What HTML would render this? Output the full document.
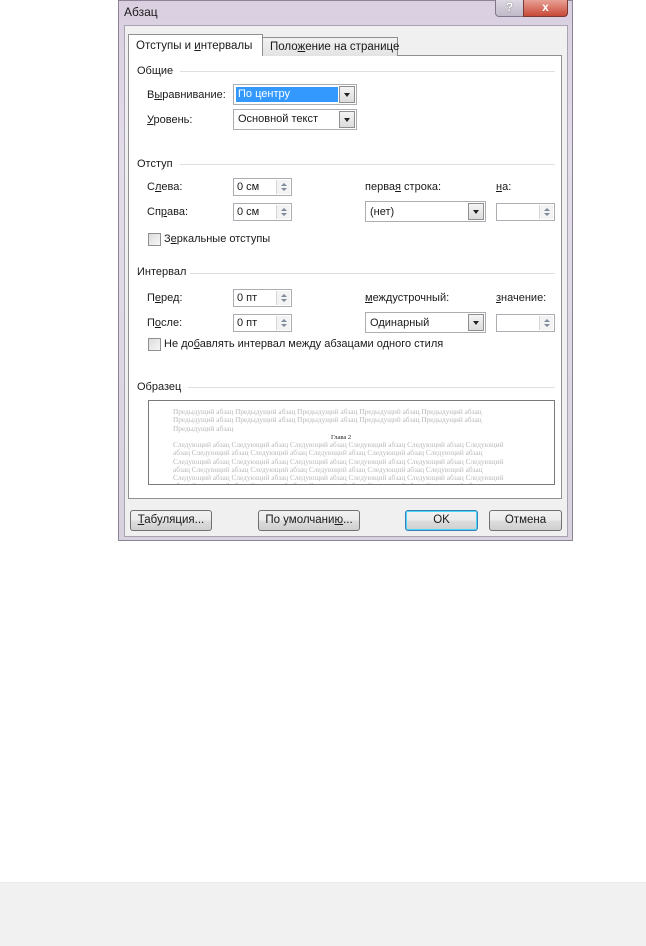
<!DOCTYPE html>
<html><head><meta charset="utf-8"><style>
*{margin:0;padding:0;box-sizing:border-box}
body{width:646px;height:946px;background:#fff;position:relative;overflow:hidden;font-family:"Liberation Sans","DejaVu Sans",sans-serif;font-size:11px;color:#1a1a1a}
.a{position:absolute;white-space:nowrap}
u{text-decoration:underline}
.frame{left:118px;top:0;width:455px;height:541px;background:linear-gradient(180deg,#d9cfe0 0%,#e3dce9 30%,#d8d2de 100%);border:1px solid #8c8494}
.client{left:124px;top:25px;width:444px;height:512px;background:#f0f0f0;border:1px solid #a9a2b0}
.panel{left:128px;top:55px;width:434px;height:444px;background:#fff;border:1px solid #8e8f8f}
.hdr{font-size:11px}
.line{height:1px;background:#dcdfe3}
.box{background:#fff;border:1px solid #abadb3}
.dd{position:absolute;right:1px;top:1px;bottom:1px;width:16px;background:linear-gradient(#f4f4f4,#dcdcdc);border:1px solid #8f8f8f}
.dd:after{content:"";position:absolute;left:4px;top:6px;border-left:3px solid transparent;border-right:3px solid transparent;border-top:4px solid #222}
.sp{position:absolute;right:1px;top:1px;bottom:1px;width:14px;background:#f3f3f3;border-left:1px solid #d6d6d6}
.sp:before{content:"";position:absolute;left:4px;top:3px;border-left:3px solid transparent;border-right:3px solid transparent;border-bottom:3px solid #7c8a99}
.sp:after{content:"";position:absolute;left:4px;bottom:3px;border-left:3px solid transparent;border-right:3px solid transparent;border-top:3px solid #7c8a99}
.cb{width:13px;height:13px;border:1px solid #8e8f8f;background:linear-gradient(135deg,#dcdcdc,#f6f6f6)}
.btn{height:21px;border:1px solid #707070;border-radius:3px;background:linear-gradient(#f2f2f2 0%,#ebebeb 50%,#dddddd 51%,#cfcfcf 100%);text-align:center;line-height:19px;font-size:11.5px}
.pv{font-family:"Liberation Serif",serif;font-size:7.3px;color:#b8b8b8;line-height:8.3px}
</style></head><body>
<div class="a frame"></div>
<div class="a" style="left:124px;top:5px;font-size:12px">Абзац</div>
<div class="a" style="left:495px;top:0;width:29px;height:17px;border:1px solid #80788a;border-top:none;border-radius:0 0 0 4px;background:linear-gradient(#ddd8e2,#bfb8c8);text-align:center;color:#fff;font-size:12px;line-height:15px;font-weight:bold;text-shadow:0 0 1px #333">?</div>
<div class="a" style="left:523px;top:0;width:45px;height:17px;border:1px solid #7a3a32;border-top:none;border-radius:0 0 4px 0;background:linear-gradient(#e8a095,#c84a38);text-align:center;color:#fff;font-size:12px;line-height:15px;font-weight:bold">x</div>
<div class="a client"></div>
<div class="a panel"></div>
<div class="a" style="left:262px;top:37px;width:136px;height:19px;background:linear-gradient(#f2f2f2,#e3e3e3);border:1px solid #8e8f8f;border-bottom:none;font-size:11.5px;padding:3px 0 0 7px">Поло<u>ж</u>ение на странице</div>
<div class="a" style="left:128px;top:34px;width:135px;height:22px;background:#fff;border:1px solid #8e8f8f;border-bottom:none;font-size:11.5px;padding:5px 0 0 7px">Отступы и <u>и</u>нтервалы</div>

<div class="a hdr" style="left:137px;top:65px">Общие</div><div class="a line" style="left:180px;top:71px;width:375px"></div>
<div class="a" style="left:147px;top:89px">В<u>ы</u>равнивание:</div>
<div class="a box" style="left:233px;top:84px;width:124px;height:21px"><div class="a" style="left:2px;top:2px;width:102px;height:15px;background:#3399ff;color:#fff;padding:1px 0 0 2px">По центру</div><div class="dd"></div></div>
<div class="a" style="left:147px;top:114px"><u>У</u>ровень:</div>
<div class="a box" style="left:233px;top:109px;width:124px;height:21px"><div class="a" style="left:4px;top:3px">Основной текст</div><div class="dd"></div></div>

<div class="a hdr" style="left:137px;top:158px">Отступ</div><div class="a line" style="left:180px;top:164px;width:375px"></div>
<div class="a" style="left:147px;top:181px">С<u>л</u>ева:</div>
<div class="a box" style="left:233px;top:178px;width:59px;height:18px"><div class="a" style="left:3px;top:2px">0 см</div><div class="sp"></div></div>
<div class="a" style="left:365px;top:181px">перва<u>я</u> строка:</div>
<div class="a" style="left:496px;top:181px"><u>н</u>а:</div>
<div class="a" style="left:147px;top:206px">Сп<u>р</u>ава:</div>
<div class="a box" style="left:233px;top:203px;width:59px;height:18px"><div class="a" style="left:3px;top:2px">0 см</div><div class="sp"></div></div>
<div class="a box" style="left:365px;top:201px;width:121px;height:21px"><div class="a" style="left:4px;top:4px">(нет)</div><div class="dd"></div></div>
<div class="a box" style="left:496px;top:203px;width:59px;height:18px"><div class="sp"></div></div>
<div class="a cb" style="left:148px;top:233px"></div>
<div class="a" style="left:164px;top:233px">З<u>е</u>ркальные отступы</div>

<div class="a hdr" style="left:137px;top:266px">Интервал</div><div class="a line" style="left:190px;top:273px;width:365px"></div>
<div class="a" style="left:147px;top:292px">П<u>е</u>ред:</div>
<div class="a box" style="left:233px;top:289px;width:59px;height:18px"><div class="a" style="left:3px;top:2px">0 пт</div><div class="sp"></div></div>
<div class="a" style="left:365px;top:292px"><u>м</u>еждустрочный:</div>
<div class="a" style="left:496px;top:292px"><u>з</u>начение:</div>
<div class="a" style="left:147px;top:317px">П<u>о</u>сле:</div>
<div class="a box" style="left:233px;top:314px;width:59px;height:18px"><div class="a" style="left:3px;top:2px">0 пт</div><div class="sp"></div></div>
<div class="a box" style="left:365px;top:312px;width:121px;height:21px"><div class="a" style="left:4px;top:4px">Одинарный</div><div class="dd"></div></div>
<div class="a box" style="left:496px;top:314px;width:59px;height:18px"><div class="sp"></div></div>
<div class="a cb" style="left:148px;top:338px"></div>
<div class="a" style="left:164px;top:338px">Не до<u>б</u>авлять интервал между абзацами одного стиля</div>

<div class="a hdr" style="left:137px;top:381px">Образец</div><div class="a line" style="left:188px;top:387px;width:367px"></div>
<div class="a" style="left:148px;top:400px;width:407px;height:85px;border:1px solid #7a7a7a;background:#fff;overflow:hidden">
<div class="a pv" style="left:24px;top:7px">Предыдущий абзац Предыдущий абзац Предыдущий абзац Предыдущий абзац Предыдущий абзац<br>Предыдущий абзац Предыдущий абзац Предыдущий абзац Предыдущий абзац Предыдущий абзац<br>Предыдущий абзац</div>
<div class="a" style="left:182px;top:33px;font-family:'Liberation Serif',serif;font-size:6.5px;color:#222">Глава 2</div>
<div class="a pv" style="left:24px;top:40px">Следующий абзац Следующий абзац Следующий абзац Следующий абзац Следующий абзац Следующий<br>абзац Следующий абзац Следующий абзац Следующий абзац Следующий абзац Следующий абзац<br>Следующий абзац Следующий абзац Следующий абзац Следующий абзац Следующий абзац Следующий<br>абзац Следующий абзац Следующий абзац Следующий абзац Следующий абзац Следующий абзац<br>Следующий абзац Следующий абзац Следующий абзац Следующий абзац Следующий абзац Следующий<br>абзац Следующий абзац Следующий абзац Следующий абзац Следующий абзац Следующий абзац</div>
</div>

<div class="a btn" style="left:130px;top:510px;width:82px"><u>Т</u>абуляция...</div>
<div class="a btn" style="left:258px;top:510px;width:102px">По умолчани<u>ю</u>...</div>
<div class="a btn" style="left:405px;top:510px;width:73px;border-color:#3c7fb1;box-shadow:inset 0 0 0 1px #48d8fb">OK</div>
<div class="a btn" style="left:489px;top:510px;width:73px">Отмена</div>

<div class="a" style="left:0;top:882px;width:646px;height:64px;background:#f1f1f1;border-top:1px solid #ebebeb"></div>
</body></html>
